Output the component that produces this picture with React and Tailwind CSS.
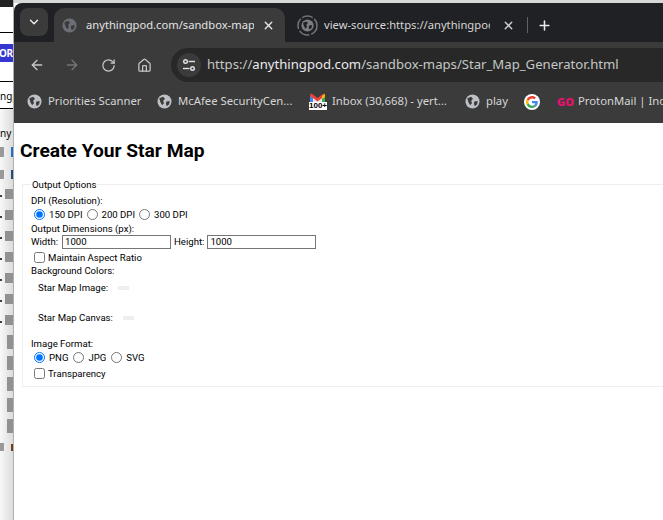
import React from 'react'
import { ArrowLeft, ArrowRight, ChevronDown, Plus, RotateCw, X, House } from 'lucide-react'

const GlobeIcon = ({ size = 15, color = '#bdc1c6', cut = '#3b3b3b' }) => (
  <svg width={size} height={size} viewBox="0 0 16 16" className="shrink-0">
    <circle cx="8" cy="8" r="7.5" fill={color} />
    <path d="M2.500 4.500 L6.500 3 L8.500 5 L6.500 7.500 L7.500 9.500 L5.500 12 L3.500 8.500 Z" fill={cut} />
    <path d="M10 8 L13.500 7.500 L13 11 L10.500 13 L9.500 10.500 Z" fill={cut} />
  </svg>
)

const LoadingGlobe = () => (
  <div className="relative w-[21px] h-[21px] shrink-0 flex items-center justify-center">
    <svg width="21" height="21" viewBox="0 0 21 21" className="absolute inset-0">
      <circle cx="10.500" cy="10.500" r="9.500" fill="none" stroke="#70757a" strokeWidth="1.500" strokeDasharray="11 2" />
    </svg>
    <GlobeIcon size={13} color="#7a7e84" cut="#202124" />
  </div>
)

const SiteSettingsIcon = () => (
  <svg width="14" height="14" viewBox="0 0 14 14" fill="none" stroke="#e3e3e3" strokeWidth="1.400">
    <circle cx="3.500" cy="3.500" r="1.800" />
    <path d="M6.500 3.500H13" />
    <circle cx="10.500" cy="10.500" r="1.800" />
    <path d="M1 10.500H7.500" />
  </svg>
)

const GmailIcon = () => (
  <div className="relative w-[17px] h-[17px] shrink-0">
    <svg width="17" height="12" viewBox="0 0 17 12">
      <path d="M1 11V2l7.500 5.500L16 2v9z" fill="#e8e8e8" />
      <path d="M1 11V2.500l3 2.200V11z" fill="#4285f4" />
      <path d="M13 11V4.700l3-2.200V11z" fill="#34a853" />
      <path d="M1 3V1.500L2.500 .5 8.500 5l6-4.500L16 1.500V3L8.500 8.500z" fill="#ea4335" />
      <path d="M13 3l3-2.200V4l-3 2z" fill="#fbbc04" />
    </svg>
    <span className="absolute left-0 top-[9px] bg-white text-black text-[8px] leading-[8px] font-bold font-['Liberation_Sans',sans-serif]">100+</span>
  </div>
)

const GoogleIcon = () => (
  <div className="w-[16px] h-[16px] rounded-full bg-white flex items-center justify-center shrink-0">
    <svg width="12" height="12" viewBox="0 0 48 48">
      <path fill="#ea4335" d="M24 9.500c3.500 0 6.700 1.200 9.200 3.600l6.900-6.900C35.900 2.400 30.400 0 24 0 14.600 0 6.500 5.400 2.600 13.200l8 6.200C12.500 13.700 17.800 9.500 24 9.500z" />
      <path fill="#4285f4" d="M47 24.500c0-1.600-.1-3.100-.4-4.500H24v9h13c-.6 3-2.200 5.500-4.800 7.200l7.700 6C44.400 37.900 47 31.800 47 24.500z" />
      <path fill="#fbbc05" d="M10.500 28.600a14.500 14.500 0 010-9.200l-8-6.200a24 24 0 000 21.600z" />
      <path fill="#34a853" d="M24 48c6.500 0 11.900-2.100 15.900-5.800l-7.700-6c-2.200 1.400-4.900 2.300-8.200 2.300-6.200 0-11.500-4.200-13.400-9.900l-8 6.200C6.500 42.600 14.600 48 24 48z" />
    </svg>
  </div>
)

const Bookmark = ({ icon, label, width }) => (
  <div className={`flex items-center gap-[6px] shrink-0 ${width}`}>
    {icon}
    <span className="text-[11.300px] text-[#d5d5d5] whitespace-nowrap">{label}</span>
  </div>
)

const Radio = ({ checked }) => (
  <input type="radio" checked={!!checked} readOnly className="w-[11px] h-[11px] m-0 accent-[#0075ff] shrink-0" />
)

const Check = () => (
  <input type="checkbox" readOnly className="w-[11px] h-[11px] m-0 shrink-0" />
)

const folderRows = [0, 1, 2, 3, 4, 5, 6]
const fileRows = [0, 1, 2, 3, 4]

// the window behind the browser, only a sliver of it shows
const BehindWindow = () => (
  <div className="w-[14px] h-full shrink-0 overflow-hidden flex flex-col bg-white border-r border-[#b0b0b0] font-['Noto_Sans',sans-serif] text-black">
    <div className="h-[7px] bg-[#222] shrink-0" />
    <div className="h-[25px] shrink-0" />
    <div className="h-px bg-black shrink-0" />
    <div className="h-[11px] shrink-0" />
    <div className="h-[18px] shrink-0 bg-[#3535d0] text-white text-[10px] tracking-[-0.5px] -indent-px font-bold leading-[18px] whitespace-nowrap">ORE</div>
    <div className="h-[19px] shrink-0" />
    <div className="h-px bg-black shrink-0" />
    <div className="h-[26px] shrink-0 text-[10px] leading-[28px] whitespace-nowrap">ngp</div>
    <div className="h-px bg-black shrink-0" />
    <div className="flex-1 flex flex-col bg-gradient-to-r from-[#f8f8f8] to-[#dcdcdc]">
      <div className="h-[14px] mt-[17px] shrink-0 text-[10px] leading-[14px] whitespace-nowrap">ny</div>
      <div className="flex justify-between h-[10px] mt-[7px] shrink-0">
        <div className="w-[4px] bg-[#999]" />
        <div className="w-[2px] bg-[#1f6fd0]" />
      </div>
      <div className="flex justify-between h-[9px] mt-[13px] shrink-0">
        <div className="w-[4px] bg-[#999]" />
        <div className="w-[2px] bg-[#1f4f80]" />
      </div>
      <div className="flex flex-col mt-[10px] shrink-0">
        {folderRows.map((row) => (
          <div key={row} className="h-[21px] shrink-0 flex justify-between">
            <div className="w-[2px] h-[2px] mt-[6px] rounded-full bg-black" />
            <div className="w-[8px] h-[10px] bg-[#919191]" />
          </div>
        ))}
      </div>
      <div className="flex flex-col mt-[-1px] shrink-0">
        {fileRows.map((row) => (
          <div key={row} className="h-[21px] shrink-0 flex justify-end">
            <div className="w-[6px] h-[14px] bg-[#919191]" />
          </div>
        ))}
      </div>
      <div className="flex justify-between h-[8px] mt-[3px] shrink-0">
        <div className="w-[4px] bg-[#999]" />
        <div className="w-[2px] h-[7px] mt-[1px] bg-[#7a3a10]" />
      </div>
    </div>
  </div>
)

const App = () => {
  return (
    <div className="w-[663px] h-[520px] flex overflow-hidden bg-white font-['Noto_Sans',sans-serif]">
      <BehindWindow />

      <div className="flex-1 min-w-0 flex flex-col">
        <div className="h-[3px] bg-[#d8d8d8]" />

        {/* tab strip */}
        <div className="h-[39px] bg-[#202124] rounded-tl-[8px] flex items-end pl-[6px] overflow-hidden">
          <div className="w-[28px] h-[28px] mb-[6px] rounded-[8px] bg-[#3b3b3b] flex items-center justify-center shrink-0">
            <ChevronDown size={14} color="#e8eaed" strokeWidth={2.5} />
          </div>
          <div className="ml-[6px] w-[231px] h-[34px] rounded-t-[10px] bg-[#3b3b3b] flex items-center pl-[8px] pr-[10px] shrink-0">
            <GlobeIcon size={15} color="#6b6f75" />
            <span className="ml-[9px] text-[11.200px] text-[#e3e3e3] whitespace-nowrap w-[168px] overflow-hidden">anythingpod.com/sandbox-map</span>
            <X size={13} color="#e8eaed" strokeWidth={2.5} className="ml-auto" />
          </div>
          <div className="ml-[12px] w-[218px] h-[34px] flex items-center shrink-0">
            <LoadingGlobe />
            <span className="ml-[6px] text-[11.200px] text-[#d5d5d5] whitespace-nowrap w-[166px] overflow-hidden">view-source:https://anythingpod</span>
            <X size={13} color="#d5d5d5" strokeWidth={2.5} className="ml-auto" />
          </div>
          <div className="w-px h-[16px] mb-[9px] ml-[12px] bg-[#5f6368] shrink-0" />
          <Plus size={15} color="#e8eaed" strokeWidth={2.5} className="ml-[9px] mb-[9px] shrink-0" />
        </div>

        {/* toolbar */}
        <div className="h-[40px] bg-[#3b3b3b] flex items-center pt-[6px] pl-[15px] overflow-hidden">
          <ArrowLeft size={16} color="#c7c7c7" strokeWidth={2} className="shrink-0" />
          <ArrowRight size={16} color="#757575" strokeWidth={2} className="ml-[19px] shrink-0" />
          <RotateCw size={15} color="#c7c7c7" strokeWidth={2} className="ml-[21px] shrink-0" />
          <House size={15} color="#c7c7c7" strokeWidth={2} className="ml-[21px] shrink-0" />
          <div className="ml-[19px] flex-1 h-[34px] rounded-l-full bg-[#282828] flex items-center pl-[6px]">
            <div className="w-[24px] h-[24px] rounded-full bg-[#3b3b3b] flex items-center justify-center shrink-0">
              <SiteSettingsIcon />
            </div>
            <span className="ml-[6px] text-[13.150px] text-[#c4c7c5] whitespace-nowrap">https://<span className="text-[#e8eaed]">anythingpod.com</span>/sandbox-maps/Star_Map_Generator.html</span>
          </div>
        </div>

        {/* bookmarks */}
        <div className="h-[41px] bg-[#3b3b3b] flex items-center pb-[2px] pl-[13px] overflow-hidden">
          <Bookmark width="w-[130px]" icon={<GlobeIcon />} label="Priorities Scanner" />
          <Bookmark width="w-[152px]" icon={<GlobeIcon />} label="McAfee SecurityCen..." />
          <Bookmark width="w-[156px]" icon={<GmailIcon />} label="Inbox (30,668) - yert..." />
          <Bookmark width="w-[59px]" icon={<GlobeIcon />} label="play" />
          <div className="w-[33px] shrink-0"><GoogleIcon /></div>
          <Bookmark width="w-[120px]" icon={<span className="w-[15px] text-[11px] font-black text-[#e8116f] leading-none">GO</span>} label="ProtonMail | Ind" />
        </div>

        {/* page */}
        <div className="flex-1 bg-white pl-[6px] pt-[16px] text-black overflow-hidden">
          <h1 className="text-[19.200px] leading-[24px] font-bold font-['Roboto',sans-serif]">Create Your Star Map</h1>
          <fieldset className="mt-[15px] ml-[2px] h-[209px] border border-[#eeeeee] border-r-0 pl-[8px] text-[9.600px] leading-[13px] font-['Roboto',sans-serif]">
            <legend className="px-px">Output Options</legend>
            <div className="mt-[3px]">DPI (Resolution):</div>
            <div className="flex items-center h-[15px] pl-[3px]">
              <Radio checked />
              <span className="ml-[4px]">150 DPI</span>
              <span className="ml-[4px] flex"><Radio /></span>
              <span className="ml-[4px]">200 DPI</span>
              <span className="ml-[4px] flex"><Radio /></span>
              <span className="ml-[4px]">300 DPI</span>
            </div>
            <div>Output Dimensions (px):</div>
            <div className="flex items-center h-[15px] -mt-px">
              <span>Width:</span>
              <input readOnly value="1000" className="ml-[4px] w-[109px] h-[14px] border border-[#767676] px-[2px] text-[9.600px] text-black outline-none" />
              <span className="ml-[3px]">Height:</span>
              <input readOnly value="1000" className="ml-[3px] w-[109px] h-[14px] border border-[#767676] px-[2px] text-[9.600px] text-black outline-none" />
            </div>
            <div className="flex items-center h-[15px] pl-[3px] mt-px">
              <Check />
              <span className="ml-[3px]">Maintain Aspect Ratio</span>
            </div>
            <div className="-mt-px">Background Colors:</div>
            <div className="flex items-center h-[15px] mt-[3px] pl-[7px]">
              <span>Star Map Image:</span>
              <div className="ml-[10px] w-[11px] h-[4px] bg-[#eeeeee]" />
            </div>
            <div className="flex items-center h-[15px] mt-[15px] pl-[7px]">
              <span>Star Map Canvas:</span>
              <div className="ml-[10px] w-[11px] h-[4px] bg-[#eeeeee]" />
            </div>
            <div className="mt-[12px]">Image Format:</div>
            <div className="flex items-center h-[15px] pl-[3px]">
              <Radio checked />
              <span className="ml-[4px]">PNG</span>
              <span className="ml-[5px] flex"><Radio /></span>
              <span className="ml-[4px]">JPG</span>
              <span className="ml-[5px] flex"><Radio /></span>
              <span className="ml-[4px]">SVG</span>
            </div>
            <div className="flex items-center h-[15px] pl-[3px] mt-px">
              <Check />
              <span className="ml-[3px]">Transparency</span>
            </div>
          </fieldset>
        </div>
      </div>
    </div>
  )
}

export default App
